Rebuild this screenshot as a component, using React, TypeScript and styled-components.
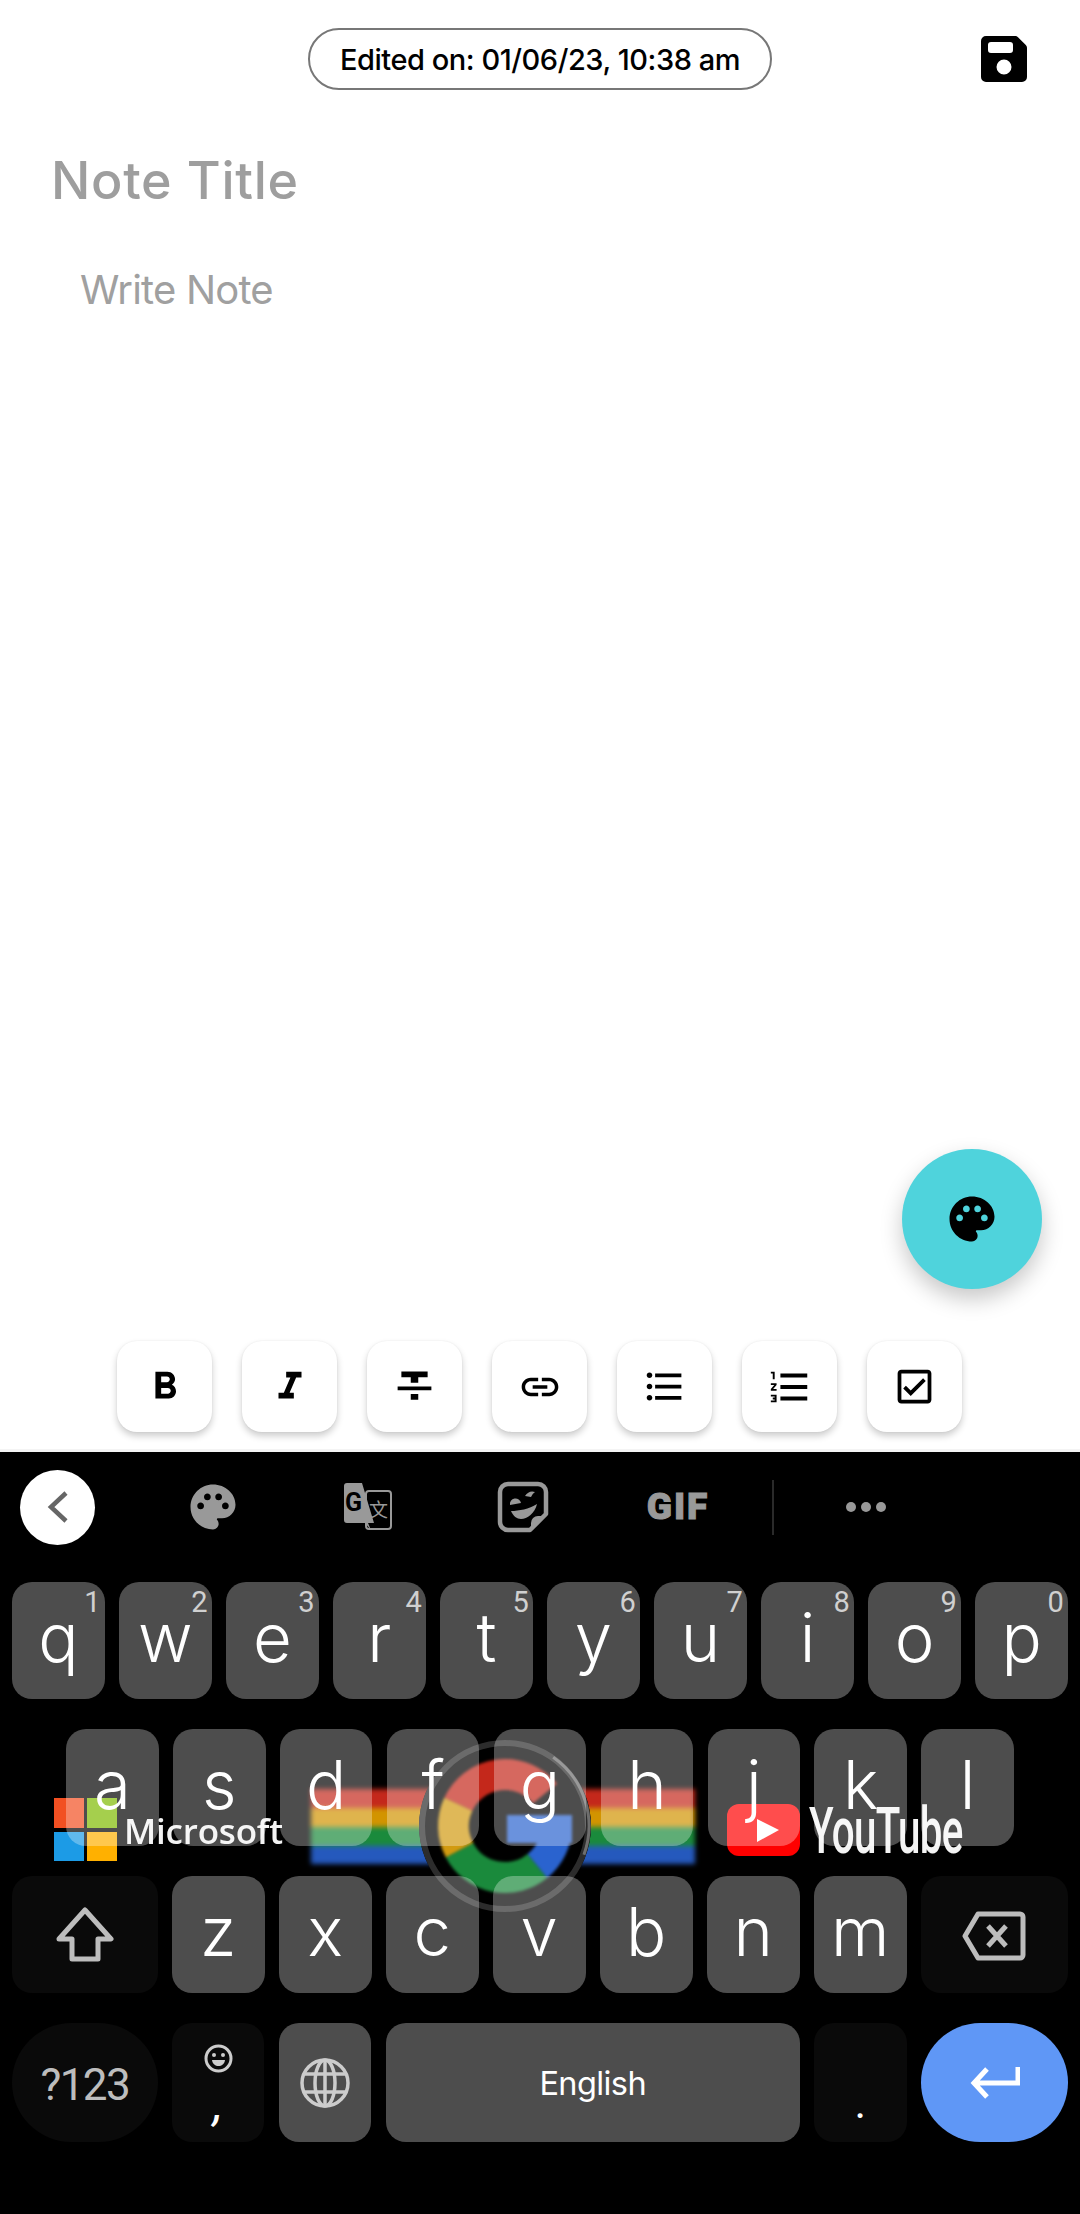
import React from "react";
import styled, { createGlobalStyle } from "styled-components";
import {
  MdFormatBold,
  MdFormatItalic,
  MdFormatStrikethrough,
  MdLink,
  MdFormatListBulleted,
  MdFormatListNumbered,
  MdOutlineCheckBox,
  MdPalette,
} from "react-icons/md";

const Global = createGlobalStyle`
  html, body { margin: 0; padding: 0; background: #fff; }
  #root { width: 1080px; height: 2214px; }
`;

const Screen = styled.div`
  width: 1080px;
  height: 2214px;
  display: flex;
  flex-direction: column;
  overflow: hidden;
  font-family: Inter, sans-serif;
  background: #fff;
`;

const Editor = styled.div`
  height: 1452px;
  display: flex;
  flex-direction: column;
  background: linear-gradient(#fff 1449px, #f4f4f4 1449px);
`;

const Header = styled.header`
  display: grid;
  grid-template-columns: 1fr auto 1fr;
  align-items: center;
  height: 62px;
  margin-top: 28px;
  padding: 0 53px;
`;

const EditedPill = styled.div`
  grid-column: 2;
  box-sizing: border-box;
  width: 464px;
  height: 62px;
  border: 2px solid #777;
  border-radius: 31px;
  display: flex;
  align-items: center;
  justify-content: center;
  font-size: 29px;
  font-weight: 500;
  letter-spacing: -0.45px;
  color: #000;
`;

const SaveIcon = styled.svg`
  justify-self: end;
  width: 46px;
  height: 46px;
`;

const Title = styled.div`
  margin: 61px 0 0 51px;
  font-size: 52px;
  line-height: 60px;
  font-weight: 500;
  letter-spacing: 0.7px;
  color: #9e9e9e;
`;

const Body = styled.div`
  margin: 56px 0 0 80px;
  font-size: 40px;
  line-height: 46px;
  letter-spacing: -0.8px;
  color: #a0a0a0;
`;

const FabRow = styled.div`
  margin-top: auto;
  display: flex;
  justify-content: flex-end;
  padding-right: 38px;
`;

const Fab = styled.div`
  width: 140px;
  height: 140px;
  border-radius: 50%;
  background: #4fd3dc;
  box-shadow: 0 10px 22px rgba(0, 0, 0, 0.22);
  display: flex;
  align-items: center;
  justify-content: center;
  color: #000;
`;

const FormatBar = styled.div`
  display: flex;
  gap: 30px;
  padding-left: 117px;
  margin: 52px 0 20px;
`;

const FormatButton = styled.div`
  width: 95px;
  height: 91px;
  border-radius: 20px;
  background: #fff;
  box-shadow: 0 4px 7px rgba(0, 0, 0, 0.2), 0 0 2px rgba(0, 0, 0, 0.07);
  display: flex;
  align-items: center;
  justify-content: center;
  color: #000;
`;

const Keyboard = styled.div`
  position: relative;
  flex: 1;
  background: #000;
  display: flex;
  flex-direction: column;
`;

const LogoLayer = styled.div`
  position: absolute;
  left: 0;
  top: 0;
  width: 1080px;
  height: 762px;
`;

const LogoArt = styled.svg`
  position: absolute;
  left: 0;
  top: 0;
`;

const Soft = styled.g<{ $blur: number }>`
  filter: blur(${(p) => p.$blur}px);
`;

const MicrosoftWord = styled.span`
  position: absolute;
  left: 124px;
  top: 357px;
  font-family: "Open Sans", sans-serif;
  font-size: 35px;
  line-height: 44px;
  font-weight: 600;
  letter-spacing: -0.2px;
  color: #f2f2f2;
  filter: blur(0.7px);
`;

const YouTubeWord = styled.span`
  position: absolute;
  left: 809px;
  top: 344px;
  font-family: Roboto, sans-serif;
  font-size: 64px;
  line-height: 72px;
  font-weight: 500;
  letter-spacing: -1px;
  color: #f4f4f4;
  transform: scaleX(0.63);
  transform-origin: left center;
  filter: blur(0.7px);
`;

const SuggestBar = styled.div`
  position: relative;
  height: 130px;
  flex: none;
  display: flex;
  align-items: center;
  padding-left: 20px;
  padding-bottom: 20px;
  box-sizing: border-box;
`;

const BackButton = styled.div`
  width: 75px;
  height: 75px;
  border-radius: 50%;
  background: #fff;
  display: flex;
  align-items: center;
  justify-content: center;
  margin-right: 40.5px;
`;

const ToolSlot = styled.div`
  width: 155px;
  display: flex;
  align-items: center;
  justify-content: center;
  color: #999;
`;

const GifLabel = styled.span`
  font-family: Roboto, sans-serif;
  font-weight: 900;
  font-size: 37px;
  line-height: 36px;
  letter-spacing: 2px;
  color: #999;
  -webkit-text-stroke: 1px #999;
`;

const BarDivider = styled.div`
  width: 2px;
  height: 55px;
  background: #2a2a2a;
  margin-left: 16px;
`;

const Dots = styled.div`
  display: flex;
  gap: 5px;
  margin-left: 72px;
`;

const Dot = styled.i`
  width: 10px;
  height: 10px;
  border-radius: 50%;
  background: #999;
`;

const KeyRows = styled.div`
  position: relative;
  display: flex;
  flex-direction: column;
  gap: 30px;
`;

const KeyRow = styled.div<{ $inset: number }>`
  display: flex;
  justify-content: space-between;
  padding: 0 ${(p) => p.$inset}px;
`;

const Key = styled.div<{ $w?: number; $h?: number; $tone?: "light" | "dark" | "blue"; $round?: boolean }>`
  position: relative;
  flex: 0 0 ${(p) => p.$w ?? 92.6}px;
  height: ${(p) => p.$h ?? 117}px;
  border-radius: ${(p) => (p.$round ? "60px" : "20px")};
  background: ${(p) =>
    p.$tone === "dark"
      ? "rgba(255,255,255,0.04)"
      : p.$tone === "blue"
      ? "#5f97f6"
      : "rgba(255,255,255,0.3)"};
  display: flex;
  align-items: center;
  justify-content: center;
`;

const Letter = styled.span`
  position: absolute;
  left: 0;
  right: 0;
  top: 0;
  text-align: center;
  font-family: Inter, sans-serif;
  font-weight: 300;
  font-size: 67px;
  line-height: 111px;
  color: #fff;
`;

const Hint = styled.span`
  position: absolute;
  right: 4px;
  top: 3px;
  font-family: Roboto, sans-serif;
  font-weight: 400;
  font-size: 29px;
  line-height: 34px;
  color: #d0d0d0;
`;

const SymbolLabel = styled.span`
  font-family: Roboto, sans-serif;
  font-size: 44px;
  color: #bdbdbd;
  letter-spacing: -1.6px;
  padding-top: 4px;
`;

const SpaceLabel = styled.span`
  font-family: Inter, sans-serif;
  font-size: 32.5px;
  letter-spacing: -0.6px;
  color: #fff;
  padding-top: 2px;
`;

const CommaLabel = styled.span`
  position: absolute;
  left: 0;
  right: 0;
  top: 57px;
  text-align: center;
  font-family: Roboto, sans-serif;
  font-size: 48px;
  line-height: 48px;
  font-style: italic;
  color: #fff;
`;

const PeriodLabel = styled.span`
  position: absolute;
  left: 0;
  right: 0;
  top: 58px;
  text-align: center;
  font-family: Roboto, sans-serif;
  font-size: 44px;
  line-height: 44px;
  color: #fff;
`;

const EmojiMark = styled.svg`
  position: absolute;
  left: 32px;
  top: 21px;
`;

const ShiftMark = styled.svg`
  display: block;
`;

const BackspaceMark = styled.svg`
  display: block;
  margin-top: 3px;
`;

const polar = (cx: number, cy: number, r: number, a: number) => {
  const t = (a * Math.PI) / 180;
  return `${(cx + r * Math.cos(t)).toFixed(2)} ${(cy + r * Math.sin(t)).toFixed(2)}`;
};

const arc = (cx: number, cy: number, r: number, from: number, to: number) =>
  `M${polar(cx, cy, r, from)} A${r} ${r} 0 ${to - from > 180 ? 1 : 0} 1 ${polar(cx, cy, r, to)}`;

const Logos = () => {
  // keyboard-local coordinates: the keyboard starts at y = 1452
  const cx = 505;
  const cy = 374;
  return (
    <LogoLayer>
      <LogoArt width="1080" height="762" viewBox="0 0 1080 762">
        <Soft $blur={0.6}>
          <rect x="54" y="346" width="30" height="30" fill="#f25022" />
          <rect x="87" y="346" width="30" height="30" fill="#7fba00" />
          <rect x="54" y="380" width="30" height="29" fill="#1c9be6" />
          <rect x="87" y="380" width="30" height="29" fill="#ffb000" />
        </Soft>
        <Soft $blur={2.5}>
          <rect x="311" y="337" width="384" height="19" fill="#c4281b" />
          <rect x="311" y="356" width="384" height="19" fill="#d29400" />
          <rect x="311" y="375" width="384" height="19" fill="#1a8a3c" />
          <rect x="311" y="394" width="384" height="18" fill="#2559bd" />
        </Soft>
        <circle cx={cx} cy={cy} r="86" fill="#000" />
        <circle cx={cx} cy={cy} r="83" fill="none" stroke="#2c2c2c" strokeWidth="6" />
        <path d={arc(cx, cy, 84, -55, 20)} fill="none" stroke="#6e6e6e" strokeWidth="3" />
        <Soft $blur={1.5}>
          <path d={arc(cx, cy, 51.5, 205, 321)} fill="none" stroke="#c4281b" strokeWidth="31" />
          <path d={arc(cx, cy, 51.5, 152, 205)} fill="none" stroke="#d29a10" strokeWidth="31" />
          <path d={arc(cx, cy, 51.5, 51, 152)} fill="none" stroke="#1a8a3c" strokeWidth="31" />
          <path d={arc(cx, cy, 51.5, 0, 51)} fill="none" stroke="#2a63cf" strokeWidth="31" />
          <rect x="507" y="363" width="65" height="28" fill="#2a63cf" />
        </Soft>
        <Soft $blur={0.7}>
          <rect x="727" y="352" width="73" height="52" rx="12" fill="#f00" />
          <path d="M757 367 L779 378 L757 390 Z" fill="#fff" />
        </Soft>
      </LogoArt>
      <MicrosoftWord>Microsoft</MicrosoftWord>
      <YouTubeWord>YouTube</YouTubeWord>
    </LogoLayer>
  );
};

const rows: [string, string][] = [
  ["q", "1"],
  ["w", "2"],
  ["e", "3"],
  ["r", "4"],
  ["t", "5"],
  ["y", "6"],
  ["u", "7"],
  ["i", "8"],
  ["o", "9"],
  ["p", "0"],
];

export default function App() {
  return (
    <Screen>
      <Global />
      <Editor>
        <Header>
          <EditedPill>Edited on: 01/06/23, 10:38 am</EditedPill>
          <SaveIcon viewBox="0 0 46 46">
            <path
              fillRule="evenodd"
              fill="#000"
              d="M5 0H34a4 4 0 0 1 3 1.2L44.8 9a4 4 0 0 1 1.2 3V41a5 5 0 0 1-5 5H5a5 5 0 0 1-5-5V5a5 5 0 0 1 5-5ZM10 6a3 3 0 0 0-3 3v5a3 3 0 0 0 3 3H29a3 3 0 0 0 3-3V9a3 3 0 0 0-3-3ZM23 23.5a7.5 7.5 0 1 0 0 15a7.5 7.5 0 1 0 0-15Z"
            />
          </SaveIcon>
        </Header>
        <Title>Note Title</Title>
        <Body>Write Note</Body>
        <FabRow>
          <Fab>
            <MdPalette size={54} />
          </Fab>
        </FabRow>
        <FormatBar>
          <FormatButton><MdFormatBold size={46} /></FormatButton>
          <FormatButton><MdFormatItalic size={46} /></FormatButton>
          <FormatButton><MdFormatStrikethrough size={45} /></FormatButton>
          <FormatButton><MdLink size={44} /></FormatButton>
          <FormatButton><MdFormatListBulleted size={45} /></FormatButton>
          <FormatButton><MdFormatListNumbered size={46} /></FormatButton>
          <FormatButton><MdOutlineCheckBox size={45} /></FormatButton>
        </FormatBar>
      </Editor>
      <Keyboard>
        <Logos />
        <SuggestBar>
          <BackButton>
            <svg width="22" height="32" viewBox="0 0 22 32">
              <path d="M19 2 L4 16 L19 30" fill="none" stroke="#666" strokeWidth="4.5" />
            </svg>
          </BackButton>
          <ToolSlot><MdPalette size={54} /></ToolSlot>
          <ToolSlot>
            <svg width="50" height="50" viewBox="0 0 50 50">
              <rect x="23" y="9" width="25" height="38" rx="3" fill="#000" stroke="#999" strokeWidth="2" />
              <path d="M4 1H19L31 41H25L28 48L22 41H4a3 3 0 0 1-3-3V4a3 3 0 0 1 3-3Z" fill="#999" />
              <text x="2" y="29" fontFamily="Roboto, sans-serif" fontWeight="700" fontSize="25" fill="#000">G</text>
              <text x="26" y="35" fontFamily="'Noto Sans CJK SC', sans-serif" fontSize="19" fill="#999">文</text>
            </svg>
          </ToolSlot>
          <ToolSlot>
            <svg width="52" height="52" viewBox="0 0 52 52">
              <path
                d="M11 3H41a8 8 0 0 1 8 8V33L33 49H11a8 8 0 0 1-8-8V11a8 8 0 0 1 8-8Z"
                fill="none"
                stroke="#999"
                strokeWidth="4.5"
                strokeLinejoin="round"
              />
              <path d="M49 35H41a7 7 0 0 0-7 7V49Z" fill="#999" />
              <path d="M13 24a5.5 5.5 0 0 1 11-2Z" fill="#999" />
              <path d="M28 15q4-6 10-4q-3 2-4 5Z" fill="#999" />
              <path d="M14 30C22 30 32 28 40 23C38 32 30 38 24 38C20 38 16 35 14 30Z" fill="#999" />
            </svg>
          </ToolSlot>
          <ToolSlot><GifLabel>GIF</GifLabel></ToolSlot>
          <BarDivider />
          <Dots><Dot /><Dot /><Dot /></Dots>
        </SuggestBar>
        <KeyRows>
          <KeyRow $inset={12}>
            {rows.map(([l, n]) => (
              <Key key={l}>
                <Letter>{l}</Letter>
                <Hint>{n}</Hint>
              </Key>
            ))}
          </KeyRow>
          <KeyRow $inset={66}>
            {"asdfghjkl".split("").map((l) => (
              <Key key={l}><Letter>{l}</Letter></Key>
            ))}
          </KeyRow>
          <KeyRow $inset={12}>
            <Key $w={145.5} $tone="dark">
              <ShiftMark width="58" height="56" viewBox="0 0 58 56">
                <path
                  d="M29 3L55 32H42V52H16V32H3Z"
                  fill="none"
                  stroke="#bdbdbd"
                  strokeWidth="5"
                  strokeLinejoin="round"
                />
              </ShiftMark>
            </Key>
            {"zxcvbnm".split("").map((l) => (
              <Key key={l}><Letter>{l}</Letter></Key>
            ))}
            <Key $w={147} $tone="dark">
              <BackspaceMark width="64" height="50" viewBox="0 0 64 50">
                <path
                  d="M16 3H58a3 3 0 0 1 3 3V44a3 3 0 0 1-3 3H16L3 25Z"
                  fill="none"
                  stroke="#bdbdbd"
                  strokeWidth="5"
                  strokeLinejoin="round"
                />
                <path d="M26 15L44 35M44 15L26 35" stroke="#bdbdbd" strokeWidth="5" fill="none" />
              </BackspaceMark>
            </Key>
          </KeyRow>
          <KeyRow $inset={12}>
            <Key $w={145.5} $h={119} $tone="dark" $round>
              <SymbolLabel>?123</SymbolLabel>
            </Key>
            <Key $h={119} $tone="dark">
              <EmojiMark width="29" height="29" viewBox="0 0 29 29">
                <circle cx="14.5" cy="14.5" r="12.5" fill="none" stroke="#ccc" strokeWidth="3" />
                <circle cx="10" cy="11" r="2" fill="#ccc" />
                <circle cx="19" cy="11" r="2" fill="#ccc" />
                <path d="M8 16H21C20 24 9 24 8 16Z" fill="#ccc" />
              </EmojiMark>
              <CommaLabel>,</CommaLabel>
            </Key>
            <Key $h={119}>
              <svg width="50" height="50" viewBox="0 0 50 50">
                <g fill="none" stroke="#ccc" strokeWidth="3.5">
                  <circle cx="25" cy="25" r="23" />
                  <ellipse cx="25" cy="25" rx="10" ry="23" />
                  <path d="M4 16H46M4 34H46M25 2V48" />
                </g>
              </svg>
            </Key>
            <Key $w={414} $h={119}>
              <SpaceLabel>English</SpaceLabel>
            </Key>
            <Key $h={119} $tone="dark">
              <PeriodLabel>.</PeriodLabel>
            </Key>
            <Key $w={147} $h={119} $tone="blue" $round>
              <svg width="50" height="34" viewBox="0 0 50 34">
                <path
                  d="M48 1V17H5M17 3L4 17L17 31"
                  fill="none"
                  stroke="#fff"
                  strokeWidth="5"
                />
              </svg>
            </Key>
          </KeyRow>
        </KeyRows>
      </Keyboard>
    </Screen>
  );
}
